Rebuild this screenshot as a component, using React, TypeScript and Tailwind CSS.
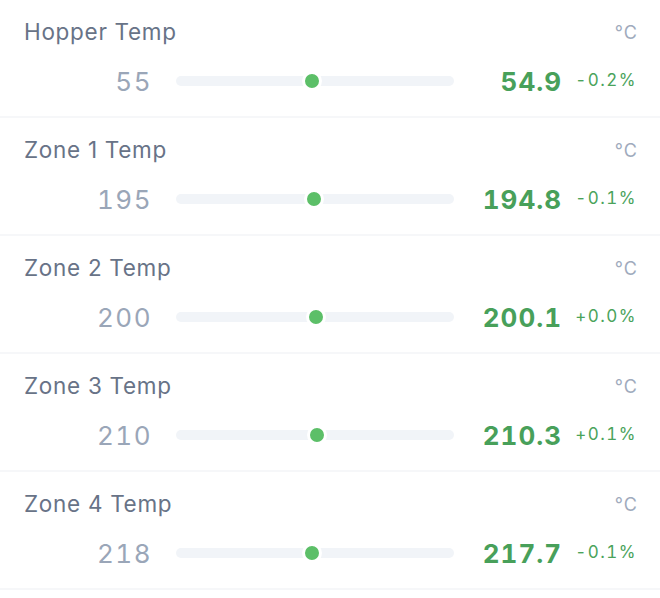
import React from "react";

type Row = { label: string; target: string; actual: string; change: string; pos: number };

const rows: Row[] = [
  { label: "Hopper Temp", target: "55", actual: "54.9", change: "-0.2%", pos: 136 },
  { label: "Zone 1 Temp", target: "195", actual: "194.8", change: "-0.1%", pos: 138 },
  { label: "Zone 2 Temp", target: "200", actual: "200.1", change: "+0.0%", pos: 140 },
  { label: "Zone 3 Temp", target: "210", actual: "210.3", change: "+0.1%", pos: 141 },
  { label: "Zone 4 Temp", target: "218", actual: "217.7", change: "-0.1%", pos: 136 },
];

export default function App() {
  return (
    <div
      className="w-[660px] h-[598px] bg-white"
      style={{ fontFamily: "Inter, 'Noto Sans', sans-serif" }}
    >
      {rows.map((r) => (
        <div key={r.label} className="h-[118px] border-b-2 border-[#f6f7f9] pl-6 pr-[23px] pt-[18px]">
          <div className="flex items-center justify-between h-[28px]">
            <span className="text-[22.5px] text-[#687387] tracking-[0.7px]">{r.label}</span>
            <span className="text-[18px] text-[#a0abbd] tracking-[1px] -mr-[1px]">°C</span>
          </div>
          <div className="flex items-center h-[32px] mt-[19px]">
            <span className="w-[128px] text-right text-[26px] text-[#9aa6b8] tabular-nums tracking-[1.5px] -mr-[1px]">{r.target}</span>
            <div className="relative w-[278px] ml-[25px] h-[10px] rounded-full bg-[#f1f4f8]">
              <div
                className="absolute top-1/2 w-[20px] h-[20px] -translate-x-1/2 -translate-y-1/2 rounded-full bg-[#5cbf68] border-[3px] border-white"
                style={{ left: `${r.pos}px` }}
              />
            </div>
            <span className="w-[108px] text-right text-[26px] font-bold text-[#48a05a] tabular-nums tracking-[1px]">{r.actual}</span>
            <span className="w-[75px] text-right text-[17px] text-[#4aa35b] tabular-nums tracking-[1.5px]">{r.change}</span>
          </div>
        </div>
      ))}
    </div>
  );
}
